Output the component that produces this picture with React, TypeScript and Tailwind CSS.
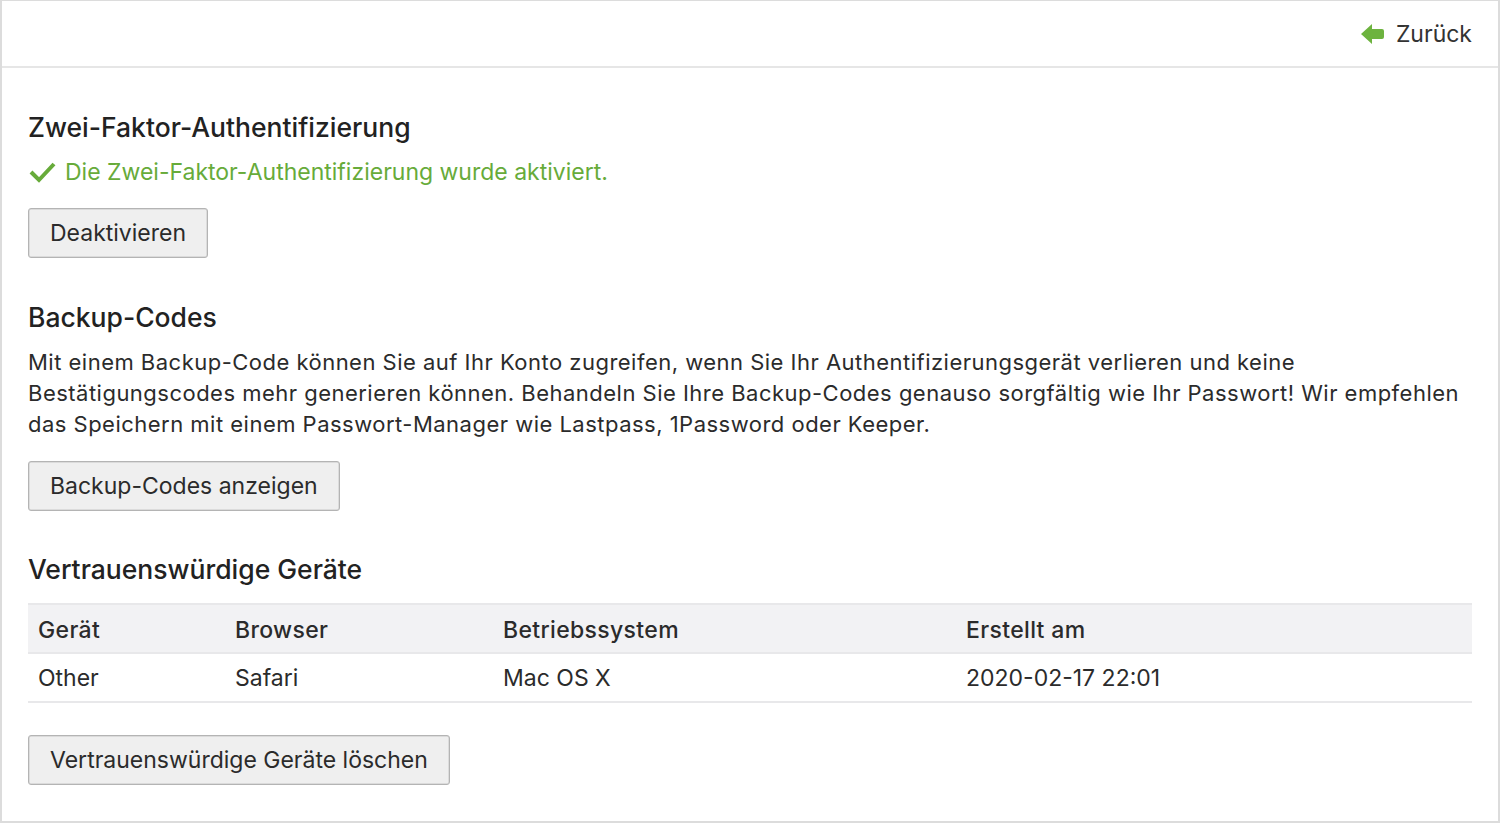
export default function App() {
  const devices = [
    { device: "Other", browser: "Safari", os: "Mac OS X", created: "2020-02-17 22:01" },
  ]

  const btn =
    "h-[50px] px-[21px] bg-[#efefef] border border-[#b4b4b4] rounded-[3px] text-[23px] text-[#2b2b2b] shadow-[inset_0_0_0_0.5px_#c8c8c8]"
  const heading = "text-[26.5px] font-medium text-[#222] leading-[34px]"

  return (
    <div
      className="w-[1500px] h-[823px] bg-white border-l-2 border-r-2 border-b-2 border-t border-[#dcdcdc] text-[#2b2b2b] overflow-hidden"
      style={{ fontFamily: "Inter, 'Noto Sans', sans-serif" }}
    >
      {/* Header */}
      <div className="h-[67px] border-b-2 border-[#e6e6e6] flex items-center justify-end pr-[26px]">
        <a className="flex items-center gap-[11px] text-[23px] text-[#333] pt-[1px]">
          <svg width="24" height="20" viewBox="0 0 24 20">
            <path d="M0 10 L11 0 L11 5 L21 5 Q23 5 23 7 L23 13 Q23 15 21 15 L11 15 L11 20 Z" fill="#6db33f" />
          </svg>
          Zurück
        </a>
      </div>

      <div className="px-[26px] pt-[42px]">
        {/* Two factor */}
        <h2 className={heading}>Zwei-Faktor-Authentifizierung</h2>
        <div className="flex items-center gap-[9px] mt-[13px] text-[23px] text-[#67ab3a] leading-[30px]">
          <svg width="27" height="22" viewBox="0 0 27 22" className="ml-[1px]">
            <polyline points="2,11 10,19 25,3" fill="none" stroke="#67ab3a" strokeWidth="4" />
          </svg>
          Die Zwei-Faktor-Authentifizierung wurde aktiviert.
        </div>
        <button className={btn + " mt-[21px]"}>Deaktivieren</button>

        {/* Backup codes */}
        <h2 className={heading + " mt-[42px]"}>Backup-Codes</h2>
        <p className="text-[22px] tracking-[0.022em] leading-[31px] mt-[13px]">
          Mit einem Backup-Code können Sie auf Ihr Konto zugreifen, wenn Sie Ihr Authentifizierungsgerät verlieren und keine
          Bestätigungscodes mehr generieren können. Behandeln Sie Ihre Backup-Codes genauso sorgfältig wie Ihr Passwort! Wir
          empfehlen das Speichern mit einem Passwort-Manager wie Lastpass, 1Password oder Keeper.
        </p>
        <button className={btn + " mt-[21px]"}>Backup-Codes anzeigen</button>

        {/* Trusted devices */}
        <h2 className={heading + " mt-[41px]"}>Vertrauenswürdige Geräte</h2>
        <table className="w-full mt-[17px] text-[23px] border-collapse">
          <thead>
            <tr className="bg-[#f2f2f4] border-t-2 border-b-2 border-[#e8e8ea]">
              <th className="w-[197px] text-left font-medium tracking-[0.015em] px-[10px] pt-[3px] h-[49px]">Gerät</th>
              <th className="w-[268px] text-left font-medium tracking-[0.015em] px-[10px] pt-[3px]">Browser</th>
              <th className="w-[463px] text-left font-medium tracking-[0.015em] px-[10px] pt-[3px]">Betriebssystem</th>
              <th className="text-left font-medium tracking-[0.015em] px-[10px] pt-[3px]">Erstellt am</th>
            </tr>
          </thead>
          <tbody>
            {devices.map((d, i) => (
              <tr key={i} className="border-b-2 border-[#e8e8ea]">
                <td className="px-[10px] pt-[2px] h-[49px]">{d.device}</td>
                <td className="px-[10px] pt-[2px]">{d.browser}</td>
                <td className="px-[10px] pt-[2px]">{d.os}</td>
                <td className="px-[10px] pt-[2px]">{d.created}</td>
              </tr>
            ))}
          </tbody>
        </table>
        <button className={btn + " mt-[32px]"}>Vertrauenswürdige Geräte löschen</button>
      </div>
    </div>
  )
}
